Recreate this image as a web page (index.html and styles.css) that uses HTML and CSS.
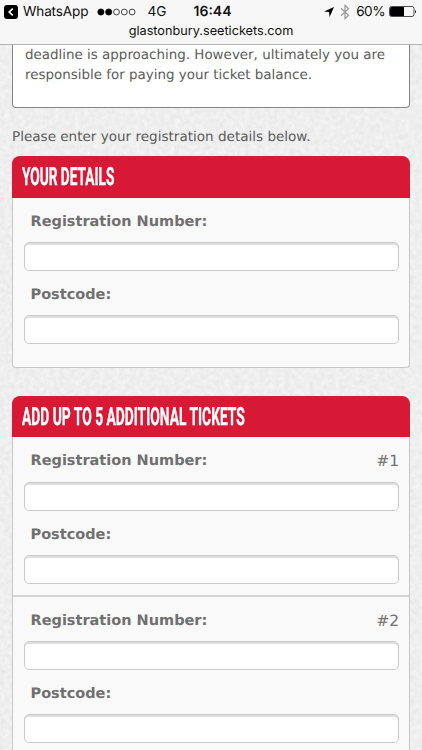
FILE: index.html
```html
<!DOCTYPE html>
<html lang="en">
<head>
<meta charset="utf-8">
<title>Glastonbury registration</title>
<link rel="stylesheet" href="styles.css">
</head>
<body>
<svg class="paper" aria-hidden="true">
  <filter id="grain" x="0" y="0" width="100%" height="100%" color-interpolation-filters="sRGB">
    <feTurbulence type="fractalNoise" baseFrequency="0.2" numOctaves="3" seed="4"/>
    <feColorMatrix values="0.08 0 0 0 0.895  0.08 0 0 0 0.895  0.08 0 0 0 0.895  0 0 0 0 1"/>
  </filter>
  <rect width="422" height="750" filter="url(#grain)"/>
</svg>
<header class="browser-bar">
  <div class="status">
    <div class="carrier">
      <svg class="back" viewBox="0 0 14 14"><rect width="14" height="14" rx="3"/><path d="M8.8 3.6 5.2 7l3.6 3.4" fill="none" stroke="#fff" stroke-width="1.6"/></svg>
      <span class="app">WhatsApp</span>
      <svg class="signal" viewBox="0 0 40 8"><g stroke="#111" stroke-width=".8"><circle cx="4" cy="4" r="3.2"/><circle cx="12" cy="4" r="3.2"/><g fill="none"><circle cx="20" cy="4" r="3"/><circle cx="28" cy="4" r="3"/><circle cx="36" cy="4" r="3"/></g></g></svg>
      <span>4G</span>
    </div>
    <div class="clock">16:44</div>
    <div class="power">
      <svg class="location" viewBox="0 0 10 10"><path d="M10 0 5.6 10 5 5 0 4.5Z"/></svg>
      <svg class="bluetooth" viewBox="0 0 10 16"><path d="m1 4.3 7.5 7L5 14.7V1.3l3.5 3.4L1 11.7" fill="none" stroke="#999" stroke-width="1.2"/></svg>
      <span class="percent">60%</span>
      <svg class="battery" viewBox="0 0 28 12"><rect x=".5" y=".5" width="24.5" height="10" rx="2" fill="none" stroke="#222" stroke-width=".8"/><path d="M2.5 1H15v9H2.5Q1 10 1 8.500V2.500Q1 1 2.500 1Z"/><path d="M26 3.500q1.600 2 0 4Z"/></svg>
    </div>
  </div>
  <div class="address">glastonbury.seetickets.com</div>
</header>
<main>
  <section class="notice"><p>deadline is approaching. However, ultimately you are</p><p>responsible for paying your ticket balance.</p></section>
  <p class="intro">Please enter your registration details below.</p>
  <section class="card first">
    <h2><span class="t1">YOUR DETAILS</span></h2>
    <div class="person">
      <label for="r0"><b>Registration Number:</b></label><input id="r0">
      <label for="p0"><b>Postcode:</b></label><input id="p0">
    </div>
  </section>
  <section class="card group">
    <h2><span class="t2">ADD UP TO 5 ADDITIONAL TICKETS</span></h2>
    <div class="person">
      <label for="r1"><b>Registration Number:</b><span>#1</span></label><input id="r1">
      <label for="p1"><b>Postcode:</b></label><input id="p1">
    </div>
    <div class="person">
      <label for="r2"><b>Registration Number:</b><span>#2</span></label><input id="r2">
      <label for="p2"><b>Postcode:</b></label><input id="p2">
    </div>
  </section>
</main>
</body>
</html>
```
FILE: styles.css
```css
* { box-sizing: border-box; }
html, body { margin: 0; height: 750px; overflow: hidden; }
body { background: #eee; font-family: "DejaVu Sans", sans-serif; color: #5b5b5b; text-rendering: geometricPrecision; }
p, h2 { margin: 0; }
.paper { position: absolute; inset: 0; width: 422px; height: 750px; z-index: -1; }
.browser-bar { height: 45px; background: #f7f7f7; border-bottom: 1px solid #b2b2b2; color: #111; font-family: Inter, sans-serif; }
.status { height: 23px; display: grid; grid-template-columns: 1fr 50px 1fr; align-items: center; font-size: 13.6px; }
.carrier, .power { display: flex; align-items: center; white-space: nowrap; }
.carrier { padding-left: 4px; }
.back { width: 14px; height: 14px; margin-right: 5px; }
.app { width: 65px; margin-right: 8.500px; letter-spacing: -.15px; }
.signal { width: 39px; height: 8px; margin-right: 12px; }
.clock { padding-left: 3px; text-align: center; font-weight: 600; font-size: 14px; }
.power { justify-content: flex-end; padding-right: 5px; }
.location { width: 10px; height: 10px; margin-right: 6px; }
.bluetooth { width: 10px; height: 16px; margin-right: 6px; }
.percent { margin-right: 4px; letter-spacing: -.5px; }
.battery { width: 28px; height: 12px; }
.address { text-align: center; font-size: 12.7px; line-height: 18px; }
main { margin: 0 12px; }
.notice { height: 63px; padding: 1px 12px 0; background: #fff; border: 1px solid #858585; border-top: 0; border-radius: 0 0 4px 4px; font-size: 13.45px; line-height: 20px; white-space: nowrap; }
.intro { margin-top: 19px; height: 29px; line-height: 20px; font-size: 13.55px; white-space: nowrap; }
.card { background: #f9f9f9; border: 1px solid #c7c7c7; border-top: 0; border-radius: 8px 8px 4px 4px; margin-bottom: 28px; }
.card h2 { height: 42px; margin: 0 -1px; padding-left: 10px; background: #d71935; border-radius: 8px 8px 0 0; color: #fff; font: 700 25px/43px Roboto, sans-serif; white-space: nowrap; }
.group h2 { height: 41px; }
h2 span { display: inline-block; transform-origin: left center; -webkit-text-stroke: .4px #fff; }
.t1 { transform: scaleX(.547); }
.t2 { transform: scaleX(.553); }
.person { padding: 0 10px 11px 11px; }
.first .person { padding-bottom: 23px; }
.group h2 + .person { padding-top: 1px; }
.person + .person { border-top: 2px solid #d2d2d2; }
label { display: flex; justify-content: space-between; height: 44px; padding: 0 0 0 6.5px; line-height: 48px; font-size: 14.5px; color: #707070; white-space: nowrap; }
.group h2 + .person label:first-child { line-height: 47px; }
label span { font-size: 15.5px; }
input { display: block; width: 374.5px; height: 29px; margin: 0; background: #fff; border: 1px solid #ccc; border-radius: 5px; box-shadow: inset 0 2px 1px #ddd; }
```
